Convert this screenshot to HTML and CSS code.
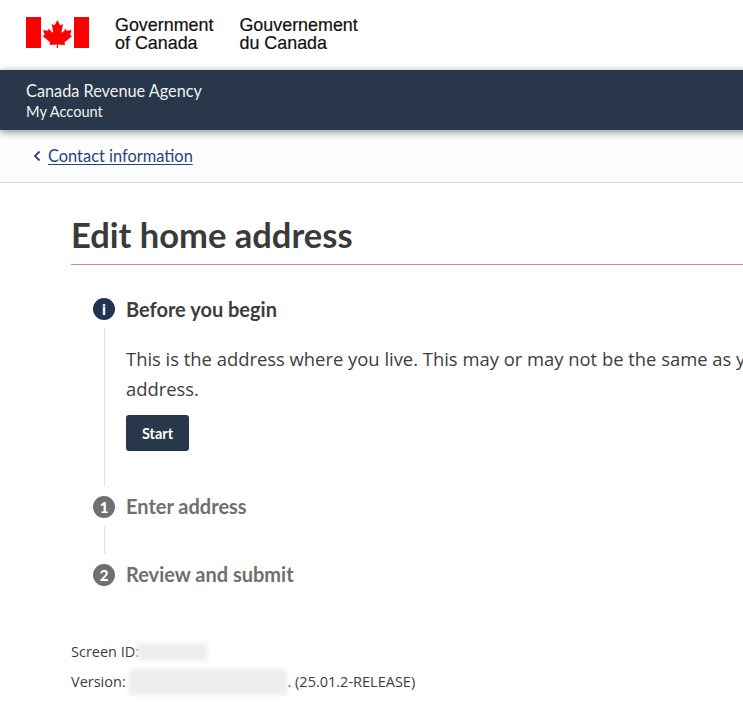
FILE: index.html
```html
<!DOCTYPE html>
<html lang="en">
<head>
<meta charset="utf-8">
<title>Edit home address</title>
<link rel="stylesheet" href="styles.css">
</head>
<body>
<div class="page">
  <header class="gov">
    <svg class="flag" viewBox="0 0 63 31" width="63" height="31" aria-hidden="true">
      <rect x="0" y="0" width="15" height="31" fill="#f00"/>
      <rect x="48" y="0" width="15" height="31" fill="#f00"/>
      <path fill="#f00" d="M31.5 3l-2.6 4.7c-.3.5-.8.5-1.300.2l-1.900-1 1.400 7.500c.3 1.400-.6 1.400-1.100.8l-3.300-3.700-.5 1.900c-.1.300-.4.500-.8.400l-4.200-.9 1.100 4c.2.900.4 1.200-.3 1.500l-1.500.7 7.300 5.900c.3.2.4.6.3 1l-.6 2.100c2.500-.3 4.800-.6 7.300-.6l.1 0-.3 7h1.600l-.3-7c2.500 0 4.800.3 7.300.6l-.6-2.100c-.1-.4 0-.8.3-1l7.300-5.900-1.500-.7c-.7-.3-.5-.6-.3-1.500l1.100-4-4.200.9c-.4.100-.7-.1-.8-.4l-.5-1.900-3.300 3.700c-.5.600-1.400.6-1.100-.8l1.400-7.500-1.900 1c-.5.300-1 .3-1.300-.2z"/>
    </svg>
    <div class="wordmark"><span>Government</span><span>of Canada</span></div>
    <div class="wordmark"><span>Gouvernement</span><span>du Canada</span></div>
  </header>
  <div class="band">
    <div class="agency">Canada Revenue Agency</div>
    <div class="account">My Account</div>
  </div>
  <nav class="crumb">
    <svg class="chev" viewBox="0 0 8 12" width="8" height="12" aria-hidden="true"><path d="M6.500 1.500L2 6l4.500 4.500" fill="none" stroke="#2b4380" stroke-width="1.800"/></svg>
    <a href="#">Contact information</a>
  </nav>
  <main class="main">
    <h1>Edit home address</h1>
    <ol class="steps">
      <li class="step">
        <div class="rail">
          <span class="dot dot-info">i</span>
          <span class="line line-long"></span>
        </div>
        <div class="step-body">
          <h2 class="step-title active">Before you begin</h2>
          <p class="copy">This is the address where you live. This may or may not be the same as your mailing address.</p>
          <button class="btn" type="button">Start</button>
        </div>
      </li>
      <li class="step">
        <div class="rail">
          <span class="dot">1</span>
          <span class="line line-short"></span>
        </div>
        <div class="step-body"><h2 class="step-title">Enter address</h2></div>
      </li>
      <li class="step">
        <div class="rail">
          <span class="dot">2</span>
        </div>
        <div class="step-body"><h2 class="step-title">Review and submit</h2></div>
      </li>
    </ol>
    <div class="meta">
      <div class="meta-row">Screen ID:<span class="blur blur-id"></span></div>
      <div class="meta-row">Version: <span class="blur blur-ver"></span>. (25.01.2-RELEASE)</div>
    </div>
  </main>
</div>
</body>
</html>
```

FILE: styles.css
```css
* { box-sizing: border-box; }
html, body { margin: 0; padding: 0; background: #fff; overflow: hidden; height: 725px; }
.page { width: 1000px; font-family: "Open Sans", sans-serif; color: #3d3d3d; }

.gov { height: 70px; display: flex; align-items: flex-start; padding: 17px 0 0 26px; background: #fff; }
.flag { display: block; flex: none; margin-right: 26px; }
.wordmark { display: flex; flex-direction: column; margin-right: 26px; margin-top: -1px; font-family: "Liberation Sans", sans-serif; font-size: 17.900px; line-height: 18px; color: #111; -webkit-text-stroke: 0.2px #111; }

.band { height: 60px; background: #283749; color: #fff; padding: 11px 0 0 26px; font-family: Lato, sans-serif; box-shadow: 0 2px 8px rgba(0,0,0,.45); position: relative; }
.agency { font-size: 16.300px; line-height: 20px; color: #f2f2f2; }
.account { font-size: 14.600px; line-height: 20px; margin-top: 1px; color: #f2f2f2; }

.crumb { height: 53px; display: flex; align-items: center; gap: 7px; padding: 0 0 1px 33px; border-bottom: 1px solid #dcdcdc; background: #fdfdfd; font-family: Lato, sans-serif; font-size: 16.400px; }
.chev { display: block; flex: none; }
.crumb a { color: #2b4380; text-decoration: underline; text-underline-offset: 2px; }

.main { padding: 0 0 0 71px; }
h1 { margin: 0; height: 82px; padding-top: 30px; border-bottom: 1px solid #e0848c; font-family: Lato, sans-serif; font-weight: 700; font-size: 34.500px; line-height: 44px; color: #3a3a3a; }

.steps { list-style: none; margin: 0; padding: 33px 0 0 22px; }
.step { display: flex; gap: 11px; }
.rail { display: flex; flex-direction: column; align-items: center; width: 22px; flex: none; }
.dot { width: 22px; height: 22px; border-radius: 50%; background: #707070; color: #fff; font-family: Lato, sans-serif; font-weight: 900; font-size: 15px; line-height: 22px; text-align: center; flex: none; }
.dot-info { background: #1f344f; }
.line { width: 1px; background: #e1e1e1; margin: 8px 0 10px; }
.line-long { height: 158px; }
.line-short { height: 28px; }
.step-body { width: 640px; }
.step-title { margin: -1px 0 0; font-family: Lato, sans-serif; font-weight: 700; font-size: 20px; line-height: 22px; color: #6f6f6f; }
.step-title.active { margin-top: 0; color: #3d3d3d; }
.copy { margin: 24px 0 0; width: 740px; font-size: 18.400px; line-height: 30px; color: #3d3d3d; }
.btn { display: block; margin-top: 11px; width: 63px; height: 36px; padding: 0; border: 0; border-radius: 3px; background: #283749; color: #fff; font-family: Lato, sans-serif; font-weight: 700; font-size: 14.500px; }

.meta { margin-top: 51px; font-size: 14.500px; line-height: 30px; color: #3d3d3d; }
.meta-row { display: flex; align-items: center; height: 30px; white-space: pre; }
.blur { display: block; background: #eeeeee; filter: blur(2px); }
.blur-id { width: 70px; height: 18px; margin-left: -2px; }
.blur-ver { width: 158px; height: 26px; }
```
